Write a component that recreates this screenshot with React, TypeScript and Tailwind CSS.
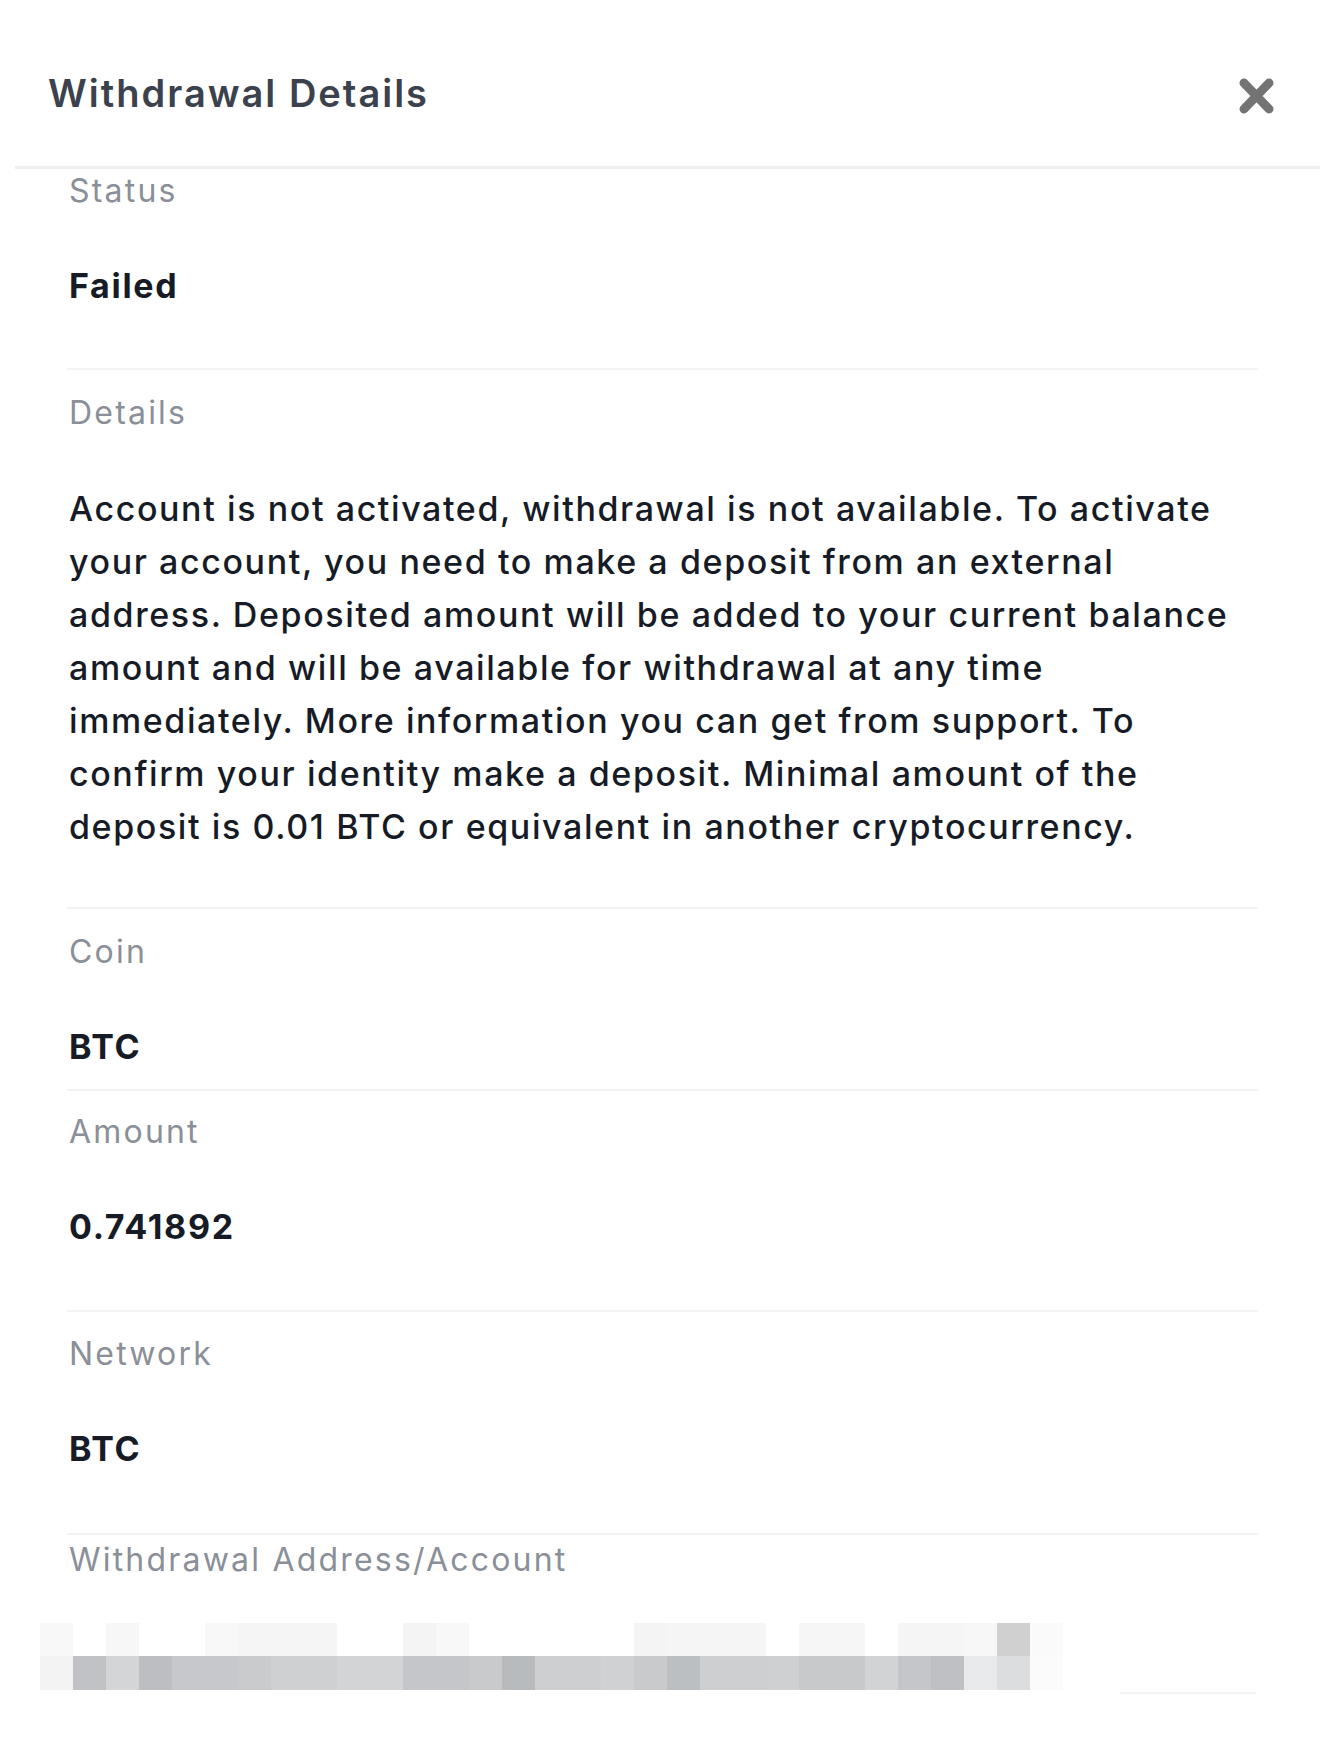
import React from 'react';

const FONT = { fontFamily: 'Inter, "Noto Sans", "Liberation Sans", sans-serif' };

// pixelated redaction of the withdrawal address (two rows of 33px cells)
const TOP_ROW = [
  'bg-[#f8f8f8]', 'bg-white', 'bg-[#f7f7f7]', 'bg-white', 'bg-white', 'bg-[#f8f8f8]', 'bg-[#f5f5f5]', 'bg-[#f5f5f5]',
  'bg-[#f5f5f5]', 'bg-white', 'bg-white', 'bg-[#f4f4f4]', 'bg-[#f8f8f8]', 'bg-white', 'bg-white', 'bg-white',
  'bg-white', 'bg-white', 'bg-[#f4f4f4]', 'bg-[#f6f5f5]', 'bg-[#f6f5f5]', 'bg-[#f6f5f5]', 'bg-white', 'bg-[#f6f6f6]',
  'bg-[#f6f6f6]', 'bg-white', 'bg-[#f5f5f5]', 'bg-[#f5f5f5]', 'bg-[#f7f7f7]', 'bg-[#d0d0d0]', 'bg-[#fafafa]',
];

const BOTTOM_ROW = [
  'bg-[#f3f3f3]', 'bg-[#c0c2c5]', 'bg-[#d4d5d7]', 'bg-[#bcbec1]', 'bg-[#c6c8cb]', 'bg-[#c6c8cb]', 'bg-[#cacbcd]', 'bg-[#cfd0d2]',
  'bg-[#cfd0d2]', 'bg-[#d3d4d6]', 'bg-[#d3d4d6]', 'bg-[#c4c6c9]', 'bg-[#c4c6c9]', 'bg-[#c8cacc]', 'bg-[#b8bbbe]', 'bg-[#cdcfd1]',
  'bg-[#cdcfd1]', 'bg-[#d0d1d3]', 'bg-[#c8cacc]', 'bg-[#bcbfc2]', 'bg-[#cdcfd1]', 'bg-[#cdcfd1]', 'bg-[#cfd0d2]', 'bg-[#c7c9cb]',
  'bg-[#c7c9cb]', 'bg-[#d2d3d5]', 'bg-[#c4c6c9]', 'bg-[#bec0c3]', 'bg-[#e9eaeb]', 'bg-[#dcdddf]', 'bg-[#fbfbfb]',
];

const Label = ({ children }: { children: React.ReactNode }) => (
  <div className="text-[32px] leading-[44px] tracking-[2.2px] text-[#8a8f98] pl-[2px]">{children}</div>
);

const Value = ({ children }: { children: React.ReactNode }) => (
  <div className="mt-[51px] text-[34px] leading-[44px] tracking-[1.7px] font-bold text-[#161b26] pl-[2px]">
    {children}
  </div>
);

export default function App() {
  return (
    <div className="w-[1333px] h-[1741px] bg-white overflow-hidden" style={FONT}>
      {/* Header */}
      <div className="h-[166px] flex justify-between pl-[48px] pr-[58px]">
        <h1 className="pt-[71px] text-[38px] leading-[44px] font-semibold tracking-[2px] text-[#3b414d]">
          Withdrawal Details
        </h1>
        <button className="mt-[78px] w-[37px] h-[36px] flex items-center justify-center" aria-label="close">
          <svg width="37" height="36" viewBox="0 0 37 36">
            <path d="M6 5 L31 31 M31 5 L6 31" stroke="#737373" strokeWidth="9" strokeLinecap="round" />
          </svg>
        </button>
      </div>
      <div className="ml-[15px] w-[1305px] h-[3px] bg-[#efefef]" />

      <div className="ml-[67px] w-[1191px]">
        {/* Status */}
        <div className="pb-[60px] border-b-2 border-[#f3f3f3]">
          <Label>Status</Label>
          <Value>Failed</Value>
        </div>

        {/* Details */}
        <div className="pt-[21px] pb-[54px] border-b-2 border-[#f3f3f3]">
          <Label>Details</Label>
          <p className="mt-[47px] text-[34px] leading-[53px] tracking-[1.6px] font-medium text-[#161b26] pl-[2px] whitespace-nowrap">
            Account is not activated, withdrawal is not available. To activate
            <br />
            your account, you need to make a deposit from an external
            <br />
            address. Deposited amount will be added to your current balance
            <br />
            amount and will be available for withdrawal at any time
            <br />
            immediately. More information you can get from support. To
            <br />
            confirm your identity make a deposit. Minimal amount of the
            <br />
            deposit is 0.01 BTC or equivalent in another cryptocurrency.
          </p>
        </div>

        {/* Coin */}
        <div className="pt-[21px] pb-[20px] border-b-2 border-[#f3f3f3]">
          <Label>Coin</Label>
          <Value>BTC</Value>
        </div>

        {/* Amount */}
        <div className="pt-[19px] pb-[61px] border-b-2 border-[#f3f3f3]">
          <Label>Amount</Label>
          <Value>0.741892</Value>
        </div>

        {/* Network */}
        <div className="pt-[20px] pb-[62px] border-b-2 border-[#f3f3f3]">
          <Label>Network</Label>
          <Value>BTC</Value>
        </div>

        {/* Withdrawal address */}
        <div className="pt-[3px]">
          <Label>Withdrawal Address/Account</Label>
        </div>
      </div>

      {/* redacted address */}
      <div className="mt-[41px] ml-[40px] flex flex-col">
        <div className="flex">
          {TOP_ROW.map((c, i) => (
            <div key={i} className={`w-[33px] h-[33px] ${c}`} />
          ))}
        </div>
        <div className="flex">
          {BOTTOM_ROW.map((c, i) => (
            <div key={i} className={`w-[33px] h-[34px] ${c}`} />
          ))}
        </div>
      </div>
      <div className="ml-[1120px] mt-[2px] w-[136px] h-[2px] bg-[#f3f3f3]" />
    </div>
  );
}
